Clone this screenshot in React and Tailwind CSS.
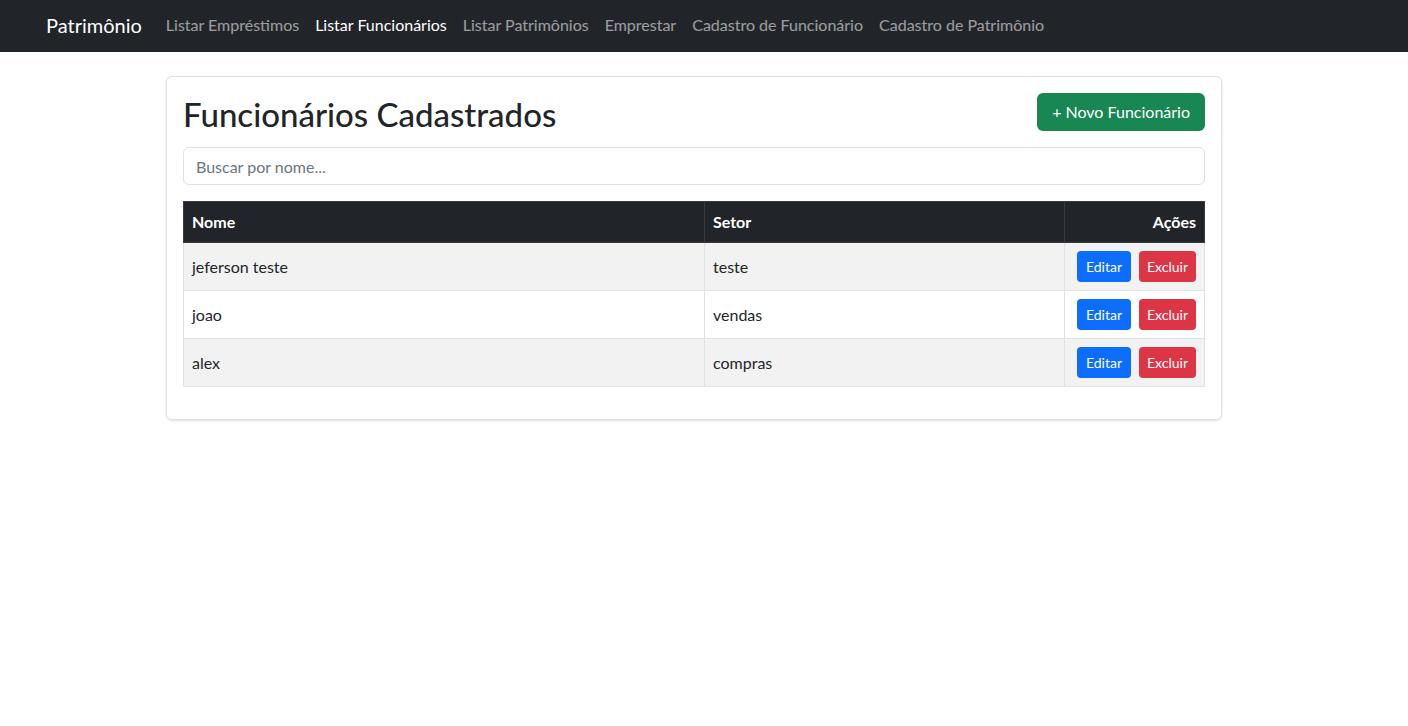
import React from 'react';

const links = [
  { label: 'Listar Empréstimos', active: false },
  { label: 'Listar Funcionários', active: true },
  { label: 'Listar Patrimônios', active: false },
  { label: 'Emprestar', active: false },
  { label: 'Cadastro de Funcionário', active: false },
  { label: 'Cadastro de Patrimônio', active: false },
];

const funcionarios = [
  { nome: 'jeferson teste', setor: 'teste' },
  { nome: 'joao', setor: 'vendas' },
  { nome: 'alex', setor: 'compras' },
];

const App = () => {
  return (
    <div className="min-h-screen bg-white text-[#212529] font-['Lato',sans-serif]">
      <nav className="h-[52px] bg-[#212529] flex items-center pl-[46px] pb-[3px]">
        <span className="text-[20px] text-white mr-4">Patrimônio</span>
        <ul className="flex items-center">
          {links.map(l => (
            <li key={l.label}>
              <a className={`block px-2 text-base ${l.active ? 'text-white' : 'text-white/55'}`}>{l.label}</a>
            </li>
          ))}
        </ul>
      </nav>

      <main className="pt-6">
        <div className="ml-[166px] w-[1056px] border border-[#dee2e6] rounded-md shadow-sm p-4">
          <div className="flex items-center justify-between mb-4">
            <h2 className="text-[33px] leading-[38px] font-medium translate-y-[2px]">Funcionários Cadastrados</h2>
            <button className="h-[38px] px-[15px] rounded-md bg-[#198754] text-white text-base">+ Novo Funcionário</button>
          </div>

          <input
            className="w-full h-[38px] px-3 border border-[#dee2e6] rounded-md text-base placeholder:text-[#6c757d] outline-none"
            placeholder="Buscar por nome..."
          />

          <table className="w-full mt-4 mb-4 border-collapse text-base">
            <thead>
              <tr className="bg-[#212529] text-white">
                <th className="w-[521px] text-left font-bold px-2 py-2 border border-[#373b3e]">Nome</th>
                <th className="w-[360px] text-left font-bold px-2 py-2 border border-[#373b3e]">Setor</th>
                <th className="text-right font-bold px-2 py-2 border border-[#373b3e]">Ações</th>
              </tr>
            </thead>
            <tbody>
              {funcionarios.map((f, i) => (
                <tr key={f.nome} className={i % 2 === 0 ? 'bg-[#f2f2f2]' : 'bg-white'}>
                  <td className="px-2 py-2 border border-[#dee2e6]">{f.nome}</td>
                  <td className="px-2 py-2 border border-[#dee2e6]">{f.setor}</td>
                  <td className="px-2 py-2 border border-[#dee2e6] text-right">
                    <div className="flex justify-end gap-2">
                      <button className="h-[31px] px-[9px] rounded bg-[#0d6efd] text-white text-sm">Editar</button>
                      <button className="h-[31px] px-[8px] rounded bg-[#dc3545] text-white text-sm">Excluir</button>
                    </div>
                  </td>
                </tr>
              ))}
            </tbody>
          </table>
        </div>
      </main>
    </div>
  );
};

export default App;
